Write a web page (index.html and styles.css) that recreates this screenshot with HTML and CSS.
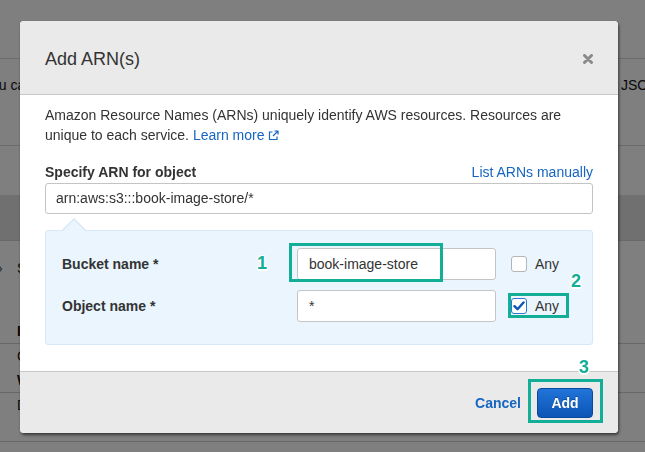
FILE: index.html
```html
<!DOCTYPE html>
<html lang="en">
<head>
<meta charset="utf-8">
<title>Add ARN(s)</title>
<link rel="stylesheet" href="styles.css">
</head>
<body>
<div class="page">
  <div class="topbar"></div>
  <div class="intro"><span class="intro-l">You can add ARNs to limit the scope of the policy</span><span class="intro-r">JSON</span></div>
  <div class="band"></div>
  <div class="sec-row"><span class="chev">›</span><span class="sec-t">Specify resources</span></div>
  <div class="list">
    <div class="li bold">Info</div>
    <div class="li">Conditions</div>
    <div class="li bold">Write</div>
    <div class="li">Delete</div>
  </div>
</div>
<div class="overlay"></div>
<div class="modal">
  <div class="modal-head">
    <h2 class="modal-title">Add ARN(s)</h2>
    <span class="close"><svg width="10" height="10" viewBox="0 0 10 10"><path d="M1.5 1.5L8.5 8.5M8.5 1.5L1.5 8.5" stroke="#8a8a8a" stroke-width="3" stroke-linecap="round"/></svg></span>
  </div>
  <div class="modal-body">
    <p class="desc">Amazon Resource Names (ARNs) uniquely identify AWS resources. Resources are unique to each service. <a class="link">Learn more <svg class="ext" width="11" height="11" viewBox="0 0 11 11"><path d="M4.5 2H1.5v7.5H9V6.5" fill="none" stroke="#1665c0" stroke-width="1.2"/><path d="M6.5 1H10v3.5M10 1L5 6" fill="none" stroke="#1665c0" stroke-width="1.2"/></svg></a></p>
    <div class="field-head"><span class="field-label">Specify ARN for object</span><a class="link">List ARNs manually</a></div>
    <div class="input">arn:aws:s3:::book-image-store/*</div>
    <div class="panel">
      <div class="panel-grid">
        <span class="plabel">Bucket name *</span>
        <div class="input small">book-image-store</div>
        <span class="any"><span class="cb"></span>Any</span>
        <span class="plabel">Object name *</span>
        <div class="input small">*</div>
        <span class="any"><span class="cb checked"><svg width="12" height="10" viewBox="0 0 12 10"><path d="M1.5 5.2L4.5 8.2L10.5 1.5" fill="none" stroke="#0b56b3" stroke-width="2.4" stroke-linecap="round" stroke-linejoin="round"/></svg></span>Any</span>
      </div>
    </div>
  </div>
  <div class="modal-foot">
    <a class="cancel">Cancel</a>
    <button class="btn-add">Add</button>
  </div>
  <div class="mark box1"></div>
  <div class="mark box2"></div>
  <div class="mark box3"></div>
  <span class="num n1">1</span>
  <span class="num n2">2</span>
  <span class="num n3">3</span>
</div>
</body>
</html>
```
FILE: styles.css
```css
* { box-sizing: border-box; }
html, body { margin: 0; padding: 0; }
body {
  width: 645px;
  height: 452px;
  overflow: hidden;
  background: #ffffff;
  font-family: "Liberation Sans", Arial, sans-serif;
  font-size: 14px;
  color: #333;
  position: relative;
}

/* background page */
.page { width: 645px; }
.topbar { height: 59px; border-bottom: 1px solid #d8d8d8; }
.intro {
  height: 87px;
  display: flex;
  padding-top: 16px;
  line-height: 20px;
  border-bottom: 1px solid #d8d8d8;
  overflow: hidden;
  white-space: nowrap;
  color: #111;
}
.intro-l { margin-left: -17px; }
.intro-r { margin-left: auto; width: 24px; flex: none; overflow: visible; }
.band { height: 46px; margin-top: 49px; background: #e0e0e0; border-bottom: 1px solid #d0d0d0; }
.sec-row { display: flex; align-items: center; height: 54px; white-space: nowrap; color: #111; }
.chev { width: 17px; text-indent: -2px; color: #444; }
.list {
  padding-top: 24px;
  height: 147px;
  border-bottom: 1px solid #cfcfcf;
}
.li { height: 24px; line-height: 24px; padding-left: 17px; color: #111; white-space: nowrap; }
.li.bold { font-weight: bold; }
.li:nth-child(2) { border-top: 1px solid #cfcfcf; height: 25px; }
.li:nth-child(4) { border-top: 1px solid #cfcfcf; height: 25px; }

.overlay {
  position: fixed;
  inset: 0;
  background: rgba(0, 0, 0, 0.5);
}

/* modal */
.modal {
  position: absolute;
  left: 20px;
  top: 21px;
  width: 598px;
  background: #fff;
  border-radius: 4px;
  box-shadow: 1px 2px 3px rgba(0, 0, 0, 0.55);
}
.modal-head {
  height: 74px;
  background: #eaeaea;
  border-bottom: 1px solid #c9c9c9;
  border-radius: 4px 4px 0 0;
  display: flex;
  align-items: center;
  justify-content: space-between;
  padding: 3px 25px 0 25px;
}
.modal-title {
  margin: 0;
  font-size: 18px;
  font-weight: normal;
  color: #333;
}
.close { display: flex; width: 10px; height: 10px; }

.modal-body { padding: 10px 25px 26px 25px; }
.desc { margin: 0; line-height: 20px; color: #333; }
.link { color: #1665c0; text-decoration: none; }
.ext { vertical-align: -1px; }
.field-head {
  margin-top: 17px;
  display: flex;
  justify-content: space-between;
  line-height: 20px;
}
.field-label { font-weight: bold; color: #333; }
.input {
  margin-top: 1px;
  height: 31px;
  border: 1px solid #c4c4c4;
  border-radius: 3px;
  background: #fff;
  padding: 0 10px;
  line-height: 29px;
  color: #333;
}
.input.small { margin-top: 0; height: 32px; line-height: 30px; padding: 0 11px; }

.panel {
  position: relative;
  margin-top: 16px;
  background: #eaf5fe;
  border: 1px solid #d6e8f7;
  border-radius: 3px;
  padding: 17px 16px 22px 16px;
}
.panel::before,
.panel::after {
  content: "";
  position: absolute;
  width: 0;
  height: 0;
  border-style: solid;
}
.panel::before {
  left: 15px;
  top: -13px;
  border-width: 0 13px 13px 13px;
  border-color: transparent transparent #d6e8f7 transparent;
}
.panel::after {
  left: 16px;
  top: -11px;
  border-width: 0 12px 12px 12px;
  border-color: transparent transparent #eaf5fe transparent;
}
.panel-grid {
  display: grid;
  grid-template-columns: 220px 199px auto;
  grid-auto-rows: 32px;
  column-gap: 15px;
  row-gap: 10px;
  align-items: center;
}
.plabel { font-weight: bold; color: #333; }
.any { display: flex; align-items: center; gap: 8px; color: #333; }
.cb {
  width: 16px;
  height: 16px;
  border: 1px solid #b5b5b5;
  border-radius: 3px;
  background: #fff;
  display: flex;
  align-items: center;
  justify-content: center;
}
.cb.checked { border-color: #2f77d4; }

.modal-foot {
  height: 62px;
  background: #eaeaea;
  border-top: 1px solid #c9c9c9;
  border-radius: 0 0 4px 4px;
  display: flex;
  justify-content: flex-end;
  align-items: flex-start;
  gap: 16px;
  padding: 16px 25px 0 0;
}
.cancel {
  color: #1665c0;
  font-weight: bold;
  line-height: 30px;
}
.btn-add {
  width: 56px;
  height: 30px;
  border: 1px solid #0a4a9c;
  border-radius: 4px;
  background: linear-gradient(#2274d8, #0b55b6);
  color: #fff;
  font-family: "Liberation Sans", Arial, sans-serif;
  font-size: 14px;
  font-weight: bold;
  padding: 0;
  text-shadow: 0 -1px 0 rgba(0, 0, 0, 0.3);
}

/* annotations */
.mark {
  position: absolute;
  border: 3px solid #12ae97;
}
.box1 { left: 269px; top: 222px; width: 154px; height: 39px; }
.box2 { left: 488px; top: 272px; width: 61px; height: 25px; }
.box3 { left: 508px; top: 358px; width: 75px; height: 44px; }
.num {
  position: absolute;
  font-size: 18px;
  font-weight: bold;
  line-height: 20px;
  color: #12ae97;
  text-shadow: -1.5px 0 #fff, 1.5px 0 #fff, 0 -1.5px #fff, 0 1.5px #fff,
    -1px -1px #fff, 1px 1px #fff, -1px 1px #fff, 1px -1px #fff;
}
.n1 { left: 237px; top: 232px; }
.n2 { left: 551px; top: 250px; }
.n3 { left: 559px; top: 336px; }
```
